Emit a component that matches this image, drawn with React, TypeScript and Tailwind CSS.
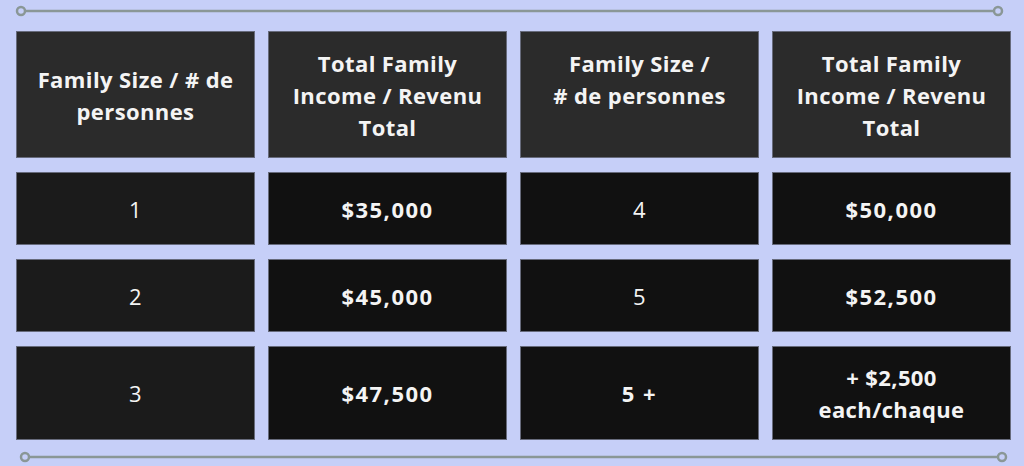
import React from "react";

type Cell = { text: string[]; bold?: boolean; num?: boolean; tone: "head" | "first" | "body"; align?: "center" | "top" };

const rows: { height: string; cells: Cell[] }[] = [
  {
    height: "h-[127px]",
    cells: [
      { text: ["Family Size / # de", "personnes"], bold: true, tone: "head" },
      { text: ["Total Family", "Income / Revenu", "Total"], bold: true, tone: "head" },
      { text: ["Family Size /", "# de personnes"], bold: true, tone: "head", align: "top" },
      { text: ["Total Family", "Income / Revenu", "Total"], bold: true, tone: "head" },
    ],
  },
  {
    height: "h-[73px]",
    cells: [
      { text: ["1"], tone: "first" },
      { text: ["$35,000"], bold: true, num: true, tone: "body" },
      { text: ["4"], tone: "body" },
      { text: ["$50,000"], bold: true, num: true, tone: "body" },
    ],
  },
  {
    height: "h-[73px]",
    cells: [
      { text: ["2"], tone: "first" },
      { text: ["$45,000"], bold: true, num: true, tone: "body" },
      { text: ["5"], tone: "body" },
      { text: ["$52,500"], bold: true, num: true, tone: "body" },
    ],
  },
  {
    height: "h-[94px]",
    cells: [
      { text: ["3"], tone: "first" },
      { text: ["$47,500"], bold: true, num: true, tone: "body" },
      { text: ["5 +"], bold: true, num: true, tone: "body" },
      { text: ["+ $2,500", "each/chaque"], bold: true, tone: "body" },
    ],
  },
];

const toneClass = {
  head: "bg-[#2b2b2b]",
  first: "bg-[#1b1b1b]",
  body: "bg-[#111111]",
};

function Rule({ x1, x2 }: { x1: number; x2: number }) {
  return (
    <svg width="1024" height="22" viewBox="0 0 1024 22" className="block">
      <line x1={x1 + 4} y1="11" x2={x2 - 4} y2="11" stroke="#8a9796" strokeWidth="2.5" />
      <circle cx={x1} cy="11" r="4" fill="none" stroke="#8a9796" strokeWidth="2.5" />
      <circle cx={x2} cy="11" r="4" fill="none" stroke="#8a9796" strokeWidth="2.5" />
    </svg>
  );
}

export default function App() {
  return (
    <div className="w-[1024px] h-[466px] overflow-hidden bg-[#c6cff8] font-['Open_Sans',sans-serif]">
      <Rule x1={21} x2={998} />
      <div className="mt-[9px] ml-4 grid grid-cols-[239px_239px_239px_239px] gap-x-[13px] gap-y-[14px]">
        {rows.map((row, r) =>
          row.cells.map((cell, c) => (
            <div
              key={`${r}-${c}`}
              className={`${row.height} ${toneClass[cell.tone]} border border-[#676b7c] flex flex-col items-center text-center text-[#f4f4f4] text-[22px] leading-[32px] ${
                cell.align === "top" ? "justify-start pt-[15px]" : "justify-center"
              } ${cell.bold ? "font-bold" : "font-normal"} ${cell.num ? "tracking-[1.5px]" : "tracking-[0.4px]"}`}
            >
              {cell.text.map((line) => (
                <span key={line}>{line}</span>
              ))}
            </div>
          ))
        )}
      </div>
      <div className="mt-[6px]">
        <Rule x1={25} x2={1002} />
      </div>
    </div>
  );
}
